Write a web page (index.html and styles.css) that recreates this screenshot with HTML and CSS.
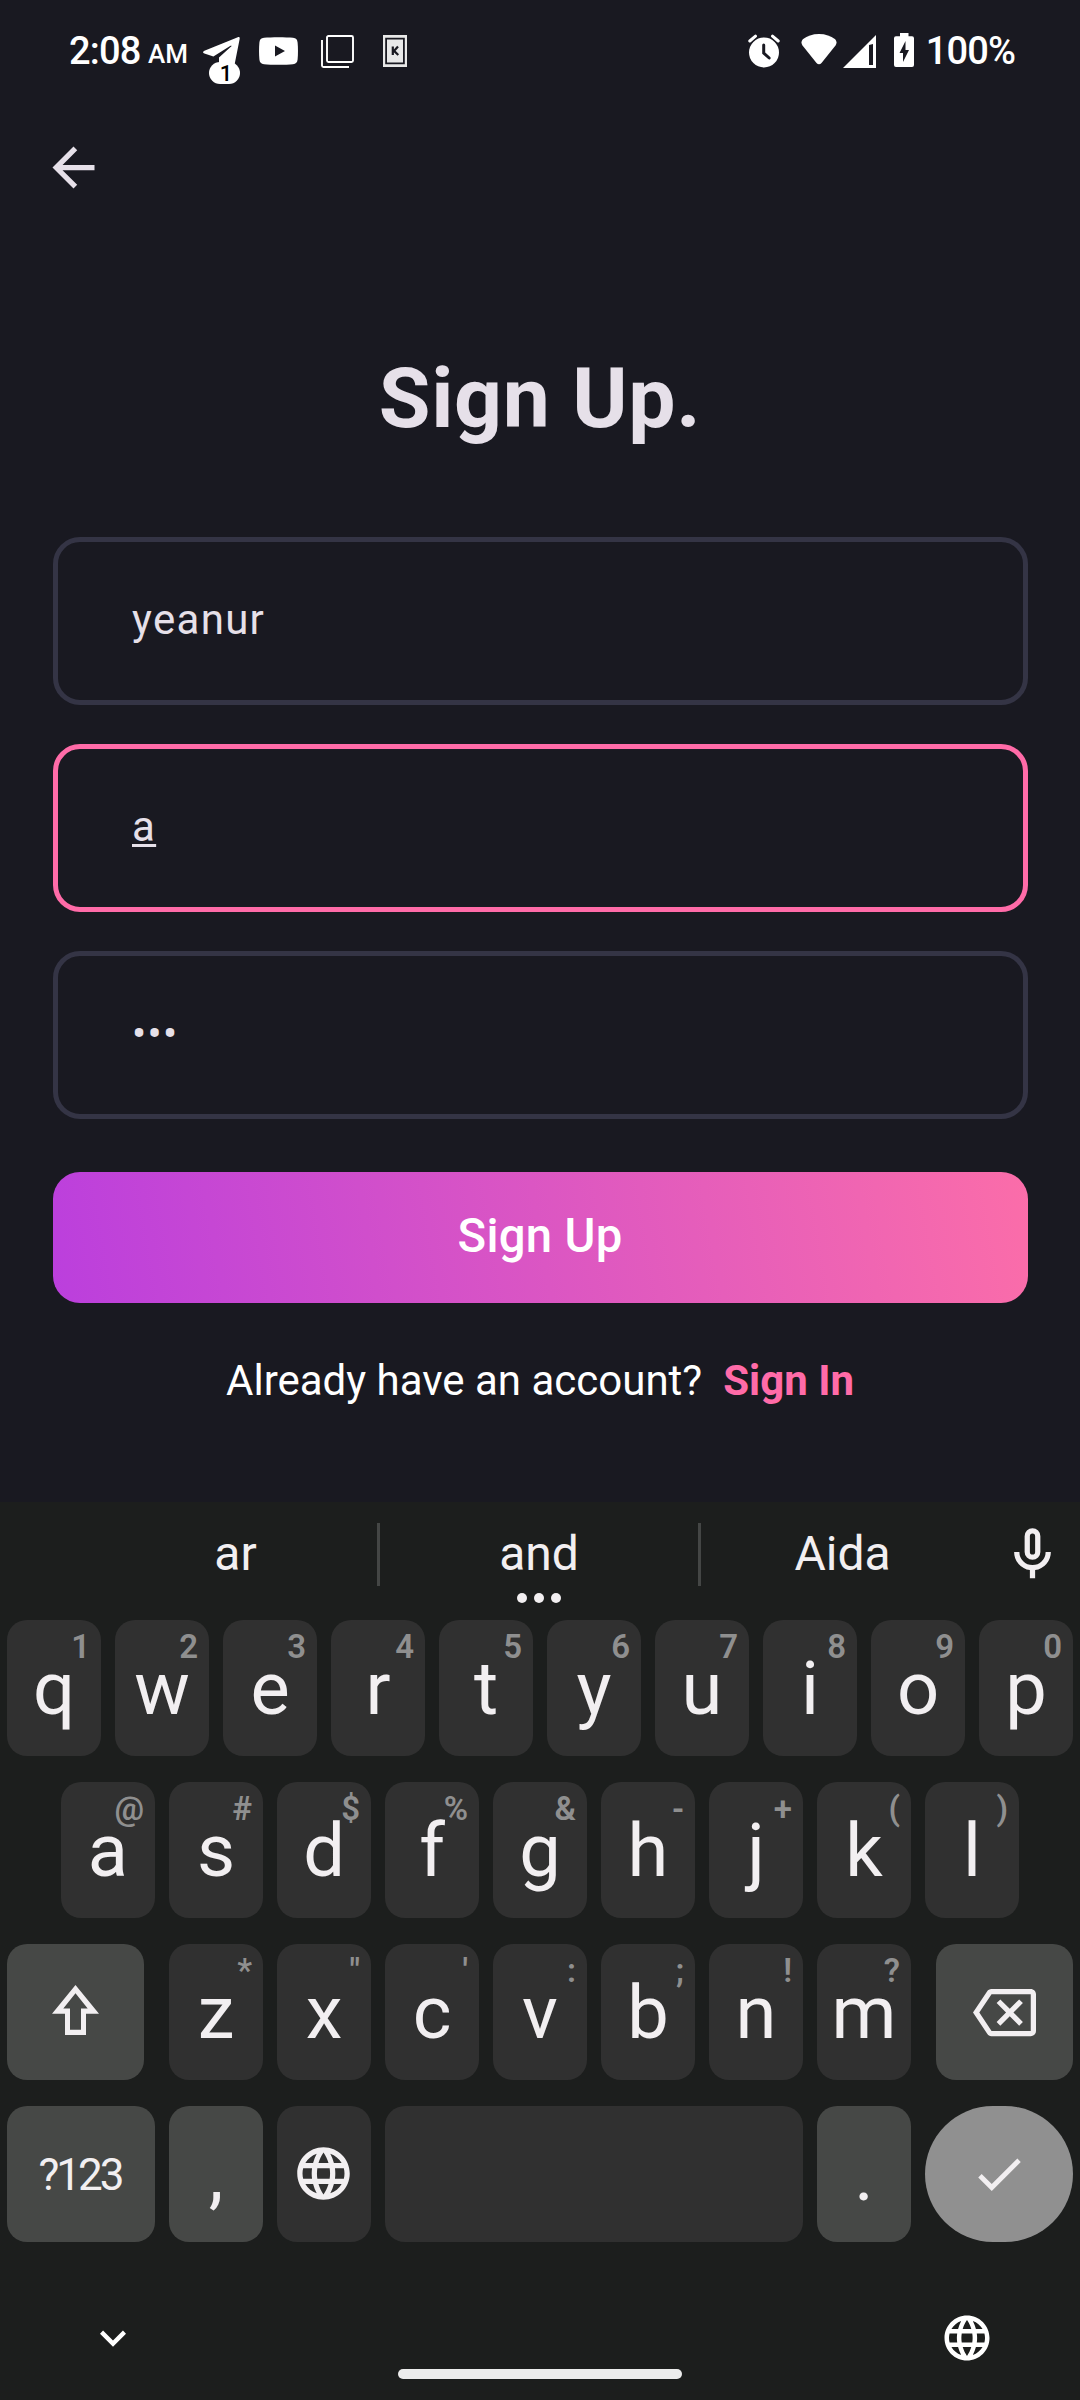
FILE: index.html
```html
<!DOCTYPE html>
<html lang="en">
<head>
<meta charset="utf-8">
<title>Sign Up</title>
<link rel="stylesheet" href="styles.css">
</head>
<body>
<svg class="defs" width="0" height="0">
  <symbol id="globe" viewBox="0 0 24 24"><path fill="currentColor" d="M11.99 2C6.47 2 2 6.48 2 12s4.47 10 9.99 10C17.52 22 22 17.52 22 12S17.52 2 11.99 2zm6.93 6h-2.95c-.32-1.25-.78-2.45-1.38-3.56 1.84.63 3.37 1.91 4.33 3.56zM12 4.04c.83 1.2 1.48 2.53 1.91 3.96h-3.82c.43-1.43 1.08-2.76 1.91-3.96zM4.26 14C4.1 13.36 4 12.69 4 12s.1-1.36.26-2h3.38c-.08.66-.14 1.32-.14 2s.06 1.34.14 2H4.26zm.82 2h2.95c.32 1.25.78 2.45 1.38 3.56-1.84-.63-3.37-1.9-4.33-3.56zm2.95-8H5.08c.96-1.66 2.49-2.93 4.33-3.56C8.81 5.55 8.35 6.75 8.03 8zM12 19.96c-.83-1.2-1.48-2.53-1.91-3.96h3.82c-.43 1.43-1.08 2.76-1.91 3.96zM14.34 14H9.66c-.09-.66-.16-1.32-.16-2s.07-1.35.16-2h4.68c.09.65.16 1.32.16 2s-.07 1.34-.16 2zm.25 5.56c.6-1.11 1.06-2.31 1.38-3.56h2.95c-.96 1.65-2.49 2.93-4.33 3.56zM16.36 14c.08-.66.14-1.32.14-2s-.06-1.34-.14-2h3.38c.16.64.26 1.31.26 2s-.1 1.36-.26 2h-3.38z"/></symbol>
</svg>
<div class="screen">
  <header class="status">
    <div class="status-left">
      <span class="clock">2:08</span><span class="ampm">AM</span>
      <span class="telegram">
        <svg width="37" height="28" viewBox="0 0 37 28"><path fill="#fff" d="M34.8.2 1.4 13.8C-.5 14.7-.3 16 1.4 16.600l9 2.800L27.500 8.800c.8-.4 1.500 0 .9.500L16 20.500V28h15.500L36.600 2.200C37 .4 36.200-.3 34.800.2z"/></svg>
        <span class="badge">1</span>
      </span>
      <svg class="youtube" width="39" height="28" viewBox="0 0 39 28"><path fill="#fff" fill-rule="evenodd" d="M5 .8C12 0 27 0 34 .8c3 .3 4.300 1.700 4.600 4.700.5 5 .5 12 0 17-.3 3-1.600 4.400-4.600 4.700-7 .8-22 .8-29 0-3-.3-4.300-1.700-4.600-4.700-.5-5-.5-12 0-17C.7 2.500 2 1.100 5 .8zM16 8.500v11L26 14z"/></svg>
      <svg class="copies" width="33" height="33" viewBox="0 0 33 33"><g fill="none" stroke="#fff" stroke-width="1.900"><rect x="6" y="1" width="26" height="26" rx="1.500"/><path d="M1 5v25.500q0 1.500 1.500 1.500H28"/></g></svg>
      <svg class="kbox" width="24" height="32" viewBox="0 0 24 32"><path fill="#e9e9e9" fill-rule="evenodd" d="M0 0h24v32H0zM2.200 2.800v26.400h19.600V2.800zM4 4.500h16v23H4z"/><path d="M9.800 11.500v8.500M15 11.500l-4 4.400 4.300 4.100" fill="none" stroke="#191921" stroke-width="2.200"/></svg>
    </div>
    <div class="status-right">
      <svg width="32" height="34" viewBox="0 0 32 34"><circle cx="16" cy="18.500" r="15" fill="#fff"/><path d="M1.800 7 7.500 2.200M30.200 7 24.500 2.200" stroke="#fff" stroke-width="3" stroke-linecap="round"/><path d="M15.700 11v8l5.500 5" fill="none" stroke="#191921" stroke-width="3" stroke-linecap="round"/></svg>
      <svg class="wifi" width="36" height="31" viewBox="0 0 36 31"><path fill="#fff" d="M18 0c6.500 0 12 2 15.800 5 2 1.700 2.300 4.500.7 6.500L20.500 29c-1.400 1.600-3.600 1.600-5 0L1.500 11.500C-.1 9.500.2 6.700 2.200 5 6 2 11.500 0 18 0z"/></svg>
      <svg class="signal" width="33" height="33" viewBox="0 0 33 33"><path fill="#fff" fill-rule="evenodd" d="M33 0v33H0zM26 10v20h4V9z"/></svg>
      <svg class="battery" width="20" height="34" viewBox="0 0 20 34"><path fill="#fff" d="M6 0h8.500v3.300H18q2 0 2 2V32q0 2-2 2H2q-2 0-2-2V5.300q0-2 2-2h4z"/><path fill="#191921" d="M11.500 8 5.500 20H9v9l6-12h-3.500z"/></svg>
      <span class="percent">100%</span>
    </div>
  </header>

  <main class="page">
    <svg class="back" width="63" height="63" viewBox="0 0 24 24"><path fill="#e6e0e9" d="M20 11H7.830l5.590-5.590L12 4l-8 8 8 8 1.410-1.410L7.830 13H20v-2z"/></svg>
    <h1 class="title">Sign Up.</h1>
    <form class="form">
      <div class="field"><span>yeanur</span></div>
      <div class="field focused"><span class="composing">a</span></div>
      <div class="field"><span>•••</span></div>
      <button class="submit" type="button">Sign Up</button>
    </form>
    <p class="account"><span>Already have an account?</span><a class="link">Sign In</a></p>
  </main>

  <section class="keyboard">
    <div class="suggestions">
      <span class="word">ar</span>
      <span class="word middle">and<span class="more"><i></i><i></i><i></i></span></span>
      <span class="word">Aida</span>
      <svg class="mic" width="63" height="63" viewBox="0 0 24 24"><path fill="currentColor" fill-rule="evenodd" d="M12 2a3 3 0 0 1 3 3v6a3 3 0 0 1-6 0V5a3 3 0 0 1 3-3zm0 2a1 1 0 0 0-1 1v6a1 1 0 0 0 2 0V5a1 1 0 0 0-1-1zM5 11h2a5 5 0 0 0 10 0h2a7 7 0 0 1-6 6.920V21h-2v-3.080A7 7 0 0 1 5 11z"/></svg>
    </div>
    <div class="row">
      <div class="key">q<sup>1</sup></div><div class="key">w<sup>2</sup></div><div class="key">e<sup>3</sup></div><div class="key">r<sup>4</sup></div><div class="key">t<sup>5</sup></div><div class="key">y<sup>6</sup></div><div class="key">u<sup>7</sup></div><div class="key">i<sup>8</sup></div><div class="key">o<sup>9</sup></div><div class="key">p<sup>0</sup></div>
    </div>
    <div class="row">
      <div class="key">a<sup>@</sup></div><div class="key">s<sup>#</sup></div><div class="key">d<sup>$</sup></div><div class="key">f<sup>%</sup></div><div class="key">g<sup>&amp;</sup></div><div class="key">h<sup>-</sup></div><div class="key">j<sup>+</sup></div><div class="key">k<sup>(</sup></div><div class="key">l<sup>)</sup></div>
    </div>
    <div class="row">
      <div class="key dark wide shift"><svg width="47" height="50" viewBox="0 0 47 50"><path fill="currentColor" fill-rule="evenodd" d="M23.500 0 47 28.700H34V50H13V28.700H0zM23.500 8.300 11.300 23.500H18V44.700H29V23.500H35.700z"/></svg></div>
      <div class="key">z<sup>*</sup></div><div class="key">x<sup>"</sup></div><div class="key">c<sup>'</sup></div><div class="key">v<sup>:</sup></div><div class="key">b<sup>;</sup></div><div class="key">n<sup>!</sup></div><div class="key">m<sup>?</sup></div>
      <div class="key dark wide erase"><svg width="63" height="63" viewBox="0 0 24 24"><path fill="currentColor" d="M22 3H7c-.69 0-1.230.35-1.590.88L0 12l5.410 8.110c.36.53.9.89 1.590.89h15c1.100 0 2-.9 2-2V5c0-1.100-.9-2-2-2zm0 16H7.070L2.400 12l4.660-7H22v14zm-11.590-2L14 13.410 17.590 17 19 15.590 15.410 12 19 8.410 17.590 7 14 10.590 10.410 7 9 8.410 12.590 12 9 15.590z"/></svg></div>
    </div>
    <div class="row">
      <div class="key dark symbols">?123</div>
      <div class="key dark">,</div>
      <div class="key icon"><svg width="63" height="63"><use href="#globe"/></svg></div>
      <div class="key space"></div>
      <div class="key dark">.</div>
      <div class="key enter icon"><svg width="58" height="58" viewBox="0 0 24 24"><path fill="currentColor" d="M9 16.170L4.830 12l-1.420 1.410L9 19 21 7l-1.410-1.410z"/></svg></div>
    </div>
    <footer class="nav">
      <svg width="52" height="52" viewBox="0 0 24 24"><path fill="#fff" d="M16.590 8.590L12 13.170 7.410 8.590 6 10l6 6 6-6z"/></svg>
      <span class="home"></span>
      <svg class="nav-globe" width="54" height="54"><use href="#globe"/></svg>
    </footer>
  </section>
</div>
</body>
</html>
```
FILE: styles.css
```css
* { box-sizing: border-box; }
body { margin: 0; background: #191921; font-family: Roboto, "Liberation Sans", sans-serif; }
svg { display: block; flex: none; }
.defs { position: absolute; }
.screen { width: 1080px; height: 2400px; display: flex; flex-direction: column; overflow: hidden; }

.status { height: 136px; flex: none; display: flex; justify-content: space-between; align-items: flex-start; padding: 25px 65px 0 69px; color: #fff; }
.status-left, .status-right { display: flex; align-items: center; height: 52px; }
.clock, .percent { font-size: 38px; font-weight: 500; line-height: 52px; }
.clock { width: 79px; letter-spacing: -0.8px; }
.percent { letter-spacing: -0.9px; }
.ampm { font-size: 26px; font-weight: 500; line-height: 52px; width: 55px; padding-top: 5px; }
.telegram { position: relative; width: 56px; }
.badge { position: absolute; left: 6px; top: 25px; width: 31px; height: 22px; border-radius: 11px; background: #fff; color: #000; font-size: 22px; font-weight: 500; line-height: 23px; text-align: center; padding-left: 3px; }
.youtube { margin-right: 23px; }
.copies { margin-right: 29px; }
.wifi { margin: -4px 6px 0 21px; }
.signal { margin-right: 18px; }
.battery { margin-right: 12px; margin-top: -2px; }

.page { height: 1366px; flex: none; display: flex; flex-direction: column; padding: 0 52.5px; }
.back { margin-left: -10.5px; }
.title { margin: 150px 0 0; font-size: 84px; font-weight: 700; line-height: 100px; letter-spacing: 0.7px; text-align: center; color: #e6e0e9; }
.form { display: flex; flex-direction: column; gap: 39.3px; margin-top: 87.5px; }
.field { height: 168px; border: 5.250px solid #343445; border-radius: 27px; padding: 0 73.500px 2px 74.5px; display: flex; align-items: center; color: #e6e0e9; font-size: 42px; letter-spacing: 1.310px; line-height: 60px; }
.field.focused { border-color: #ff6ba8; }
.composing { text-decoration: underline; text-decoration-thickness: 3px; text-underline-offset: 3px; }
.submit { margin: 13.500px 0 0; height: 131.250px; border: 0; border-radius: 27px; padding: 0 0 3px; background: linear-gradient(80deg, #bb3fdd, #fb6da9); color: #fff; font: 500 47.250px/56px Roboto, sans-serif; letter-spacing: 0.3px; }
.account { margin: 51px 0 0; display: flex; justify-content: center; gap: 21px; font-size: 42px; line-height: 54px; color: #fff; }
.link { color: #ff6ba8; font-weight: 700; }

.keyboard { height: 898px; flex: none; background: #1c1e1d; color: #f2eff1; display: flex; flex-direction: column; gap: 26px; }
.suggestions { height: 92px; flex: none; display: flex; align-items: center; padding: 21px 16px 8px 94px; }
.word { width: 283px; flex: none; height: 63px; text-align: center; font-size: 48px; line-height: 62px; }
.middle { position: relative; border: solid #444645; border-width: 0 3px; width: 324px; }
.more { position: absolute; left: 50%; top: 70px; transform: translateX(-50%); display: flex; gap: 7px; }
.more i { width: 10px; height: 10px; border-radius: 50%; background: currentColor; }
.mic { margin-left: auto; }
.row { display: flex; justify-content: center; gap: 14px; padding: 0 7px; height: 136px; flex: none; }
.key { position: relative; width: 94px; height: 136px; border-radius: 20px; background: #303030; font-size: 74px; line-height: 137px; text-align: center; }
.key sup { position: absolute; top: 0; right: 11px; font-size: 33px; font-weight: 600; line-height: 54px; color: #8f8f8f; }
.dark { background: #464846; }
.wide { width: 137px; }
.shift, .erase, .icon { display: flex; align-items: center; justify-content: center; }
.shift { margin-right: 11px; }
.shift svg { margin-top: -4px; }
.erase { margin-left: 11px; }
.icon svg { margin: -1px 0 0 -1px; }
.symbols { width: 148px; font-size: 44px; line-height: 138px; letter-spacing: -3px; padding-right: 2px; }
.space { width: 418px; }
.enter { width: 148px; border-radius: 68px; background: #909090; }
.nav { flex: 1; display: flex; justify-content: space-between; align-items: center; padding: 8px 86px 0 87px; }
.nav-globe { color: #fff; }
.home { width: 284px; height: 10px; border-radius: 5px; background: #ececec; align-self: flex-end; margin: 0 0 21px; }
```
